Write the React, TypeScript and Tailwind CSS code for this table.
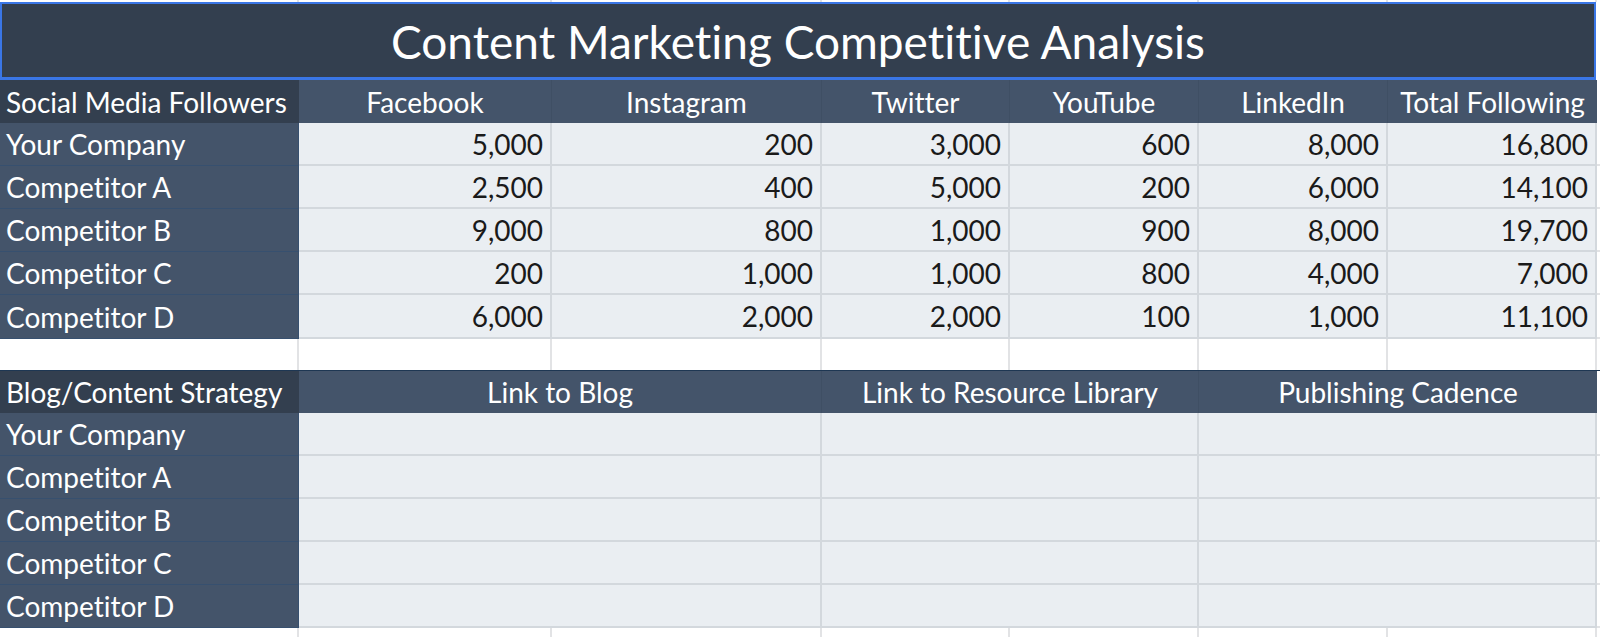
import React from "react";

const GRID = "grid grid-cols-[299px_253px_270px_188px_189px_189px_209px_3px]";

const rowsTop = [
  ["Your Company", "5,000", "200", "3,000", "600", "8,000", "16,800"],
  ["Competitor A", "2,500", "400", "5,000", "200", "6,000", "14,100"],
  ["Competitor B", "9,000", "800", "1,000", "900", "8,000", "19,700"],
  ["Competitor C", "200", "1,000", "1,000", "800", "4,000", "7,000"],
  ["Competitor D", "6,000", "2,000", "2,000", "100", "1,000", "11,100"],
];

const names = ["Your Company", "Competitor A", "Competitor B", "Competitor C", "Competitor D"];

function GridStrip({ h }: { h: string }) {
  return (
    <div className={`${GRID} ${h} bg-white`}>
      {Array.from({ length: 7 }).map((_, i) => (
        <div key={i} className="border-r-2 border-[#e2e3e5]" />
      ))}
      <div />
    </div>
  );
}

export default function App() {
  return (
    <div
      className="w-[1600px] h-[637px] overflow-hidden bg-white text-[28px] leading-none [font-variant-ligatures:none]"
      style={{ fontFamily: "Lato, 'Open Sans', sans-serif" }}
    >
      <GridStrip h="h-[2px]" />
      <div className="flex h-[78px]">
        <div className="w-[1596px] border-x-2 border-t-2 border-b-[3px] border-[#3a76e6] bg-[#333f4f] flex items-center justify-center text-white text-[46px] pt-[2px]">
          Content Marketing Competitive Analysis
        </div>
        <div className="flex-1 bg-white" />
      </div>

      {/* Header row */}
      <div className={`${GRID} h-[43px]`}>
        <div className="bg-[#333f4f] text-white flex items-center pl-[6px]">Social Media Followers</div>
        {["Facebook", "Instagram", "Twitter", "YouTube", "LinkedIn", "Total Following"].map((h, i) => (
          <div
            key={h}
            className={`bg-[#44546a] text-white flex items-center justify-center ${i === 5 ? "" : "border-r border-[#3f4f64]"}`}
          >
            {h}
          </div>
        ))}
        <div className="bg-white" />
      </div>

      {rowsTop.map((r, ri) => (
        <div key={ri} className={`${GRID} ${ri === 4 ? "h-[44px]" : "h-[43px]"}`}>
          <div
            className={`bg-[#44546a] text-white flex items-center pl-[6px] border-r border-[#37506f] ${
              ri === 4 ? "border-b border-[#1e3753]" : "border-b border-[#3d4c60]"
            }`}
          >
            {r[0]}
          </div>
          {r.slice(1).map((v, ci) => (
            <div
              key={ci}
              className="bg-[#eaeef2] text-[#1a1a1a] flex items-center justify-end pr-[7px] border-r-2 border-b-2 border-[#d3d8dd]"
            >
              {v}
            </div>
          ))}
          <div className="bg-white border-b-2 border-[#e2e3e5]" />
        </div>
      ))}

      <GridStrip h="h-[31px]" />

      {/* Blog header */}
      <div className={`${GRID} h-[43px] border-t border-[#1e3753]`}>
        <div className="bg-[#333f4f] text-white flex items-center pl-[6px]">Blog/Content Strategy</div>
        <div className="col-span-2 bg-[#44546a] text-white flex items-center justify-center border-r border-[#3f4f64]">
          Link to Blog
        </div>
        <div className="col-span-2 bg-[#44546a] text-white flex items-center justify-center border-r border-[#3f4f64]">
          Link to Resource Library
        </div>
        <div className="col-span-2 bg-[#44546a] text-white flex items-center justify-center">
          Publishing Cadence
        </div>
        <div className="bg-white" />
      </div>

      {names.map((n, ri) => (
        <div key={n} className={`${GRID} h-[43px]`}>
          <div
            className={`bg-[#44546a] text-white flex items-center pl-[6px] border-r border-[#37506f] ${
              ri === 4 ? "border-b border-[#1e3753]" : "border-b border-[#3d4c60]"
            }`}
          >
            {n}
          </div>
          <div className="col-span-2 bg-[#eaeef2] border-r-2 border-b-2 border-[#d3d8dd]" />
          <div className="col-span-2 bg-[#eaeef2] border-r-2 border-b-2 border-[#d3d8dd]" />
          <div className="col-span-2 bg-[#eaeef2] border-r-2 border-b-2 border-[#d3d8dd]" />
          <div className="bg-white border-b-2 border-[#e2e3e5]" />
        </div>
      ))}

      <GridStrip h="h-[9px]" />
    </div>
  );
}
